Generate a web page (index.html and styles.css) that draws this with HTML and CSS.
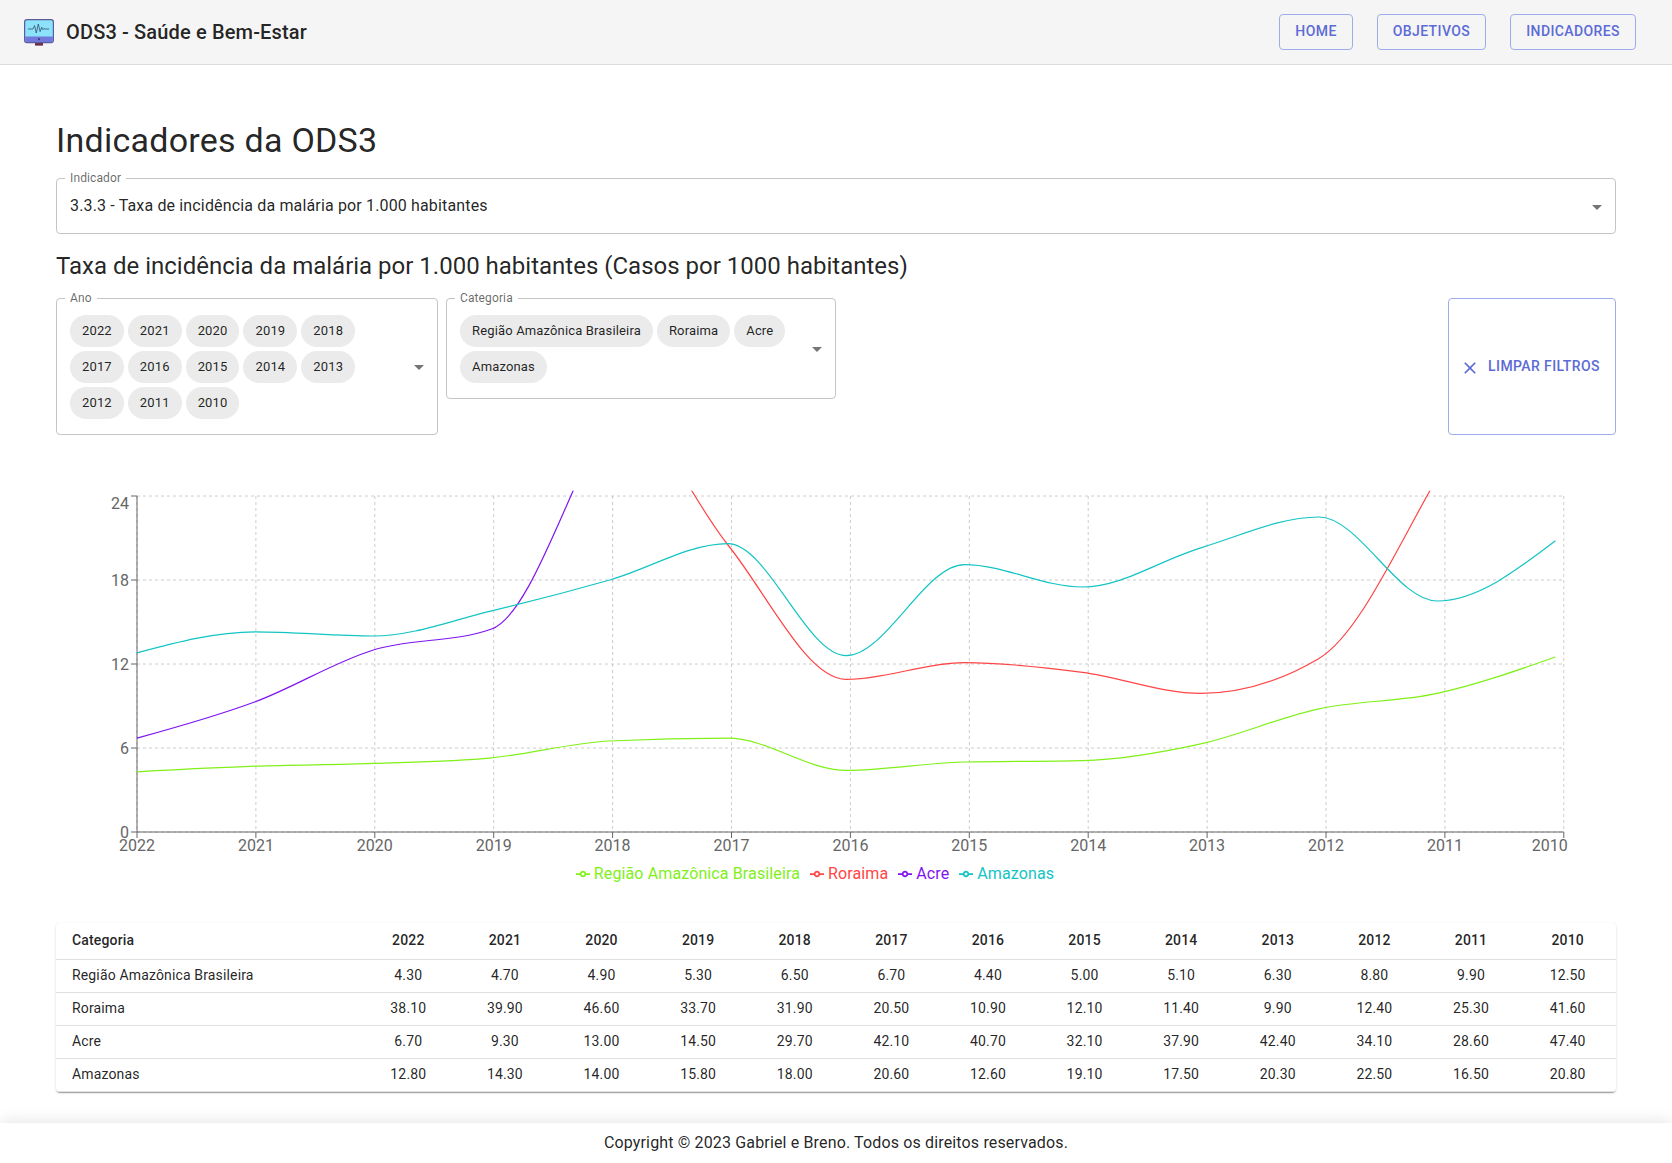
FILE: index.html
```html
<!DOCTYPE html>
<html lang="pt-BR">
<head>
<meta charset="utf-8">
<title>ODS3 - Saúde e Bem-Estar</title>
<link rel="stylesheet" href="styles.css">
</head>
<body>
<header class="appbar">
  <div class="brand">
    <svg class="logo" viewBox="0 0 30 27" aria-hidden="true">
      <rect x="11" y="23" width="8" height="3.6" fill="#6a2c4a"/>
      <rect x="0.6" y="0.6" width="28.8" height="23" rx="2.4" fill="#8be2fa" stroke="#5c5c9c" stroke-width="1.2"/>
      <path d="M1.2 17.5h27.6v3.7a1.8 1.8 0 0 1-1.8 1.8H3a1.8 1.8 0 0 1-1.8-1.8z" fill="#7078dc"/>
      <circle cx="15" cy="20.2" r="1.1" fill="#4a3f78"/>
      <path d="M4 10h5l1.6-3.4 1.7 7.4 2-9 1.8 7.6 1.6-4.4 1.2 2.6 1 -1.2 1.2 .4h4" fill="none" stroke="#35506e" stroke-width="0.8"/>
    </svg>
    <span class="brand-name">ODS3 - Saúde e Bem-Estar</span>
  </div>
  <nav class="nav">
    <a class="btn">Home</a>
    <a class="btn">Objetivos</a>
    <a class="btn">Indicadores</a>
  </nav>
</header>

<main class="content">
  <h1 class="page-title">Indicadores da ODS3</h1>

  <fieldset class="field">
    <legend class="field-label">Indicador</legend>
    <div class="field-body field-body-single">
      <span class="field-value">3.3.3 - Taxa de incidência da malária por 1.000 habitantes</span>
      <svg class="caret" viewBox="0 0 24 24" aria-hidden="true"><path d="M7 10l5 5 5-5z"/></svg>
    </div>
  </fieldset>

  <h2 class="section-title">Taxa de incidência da malária por 1.000 habitantes (Casos por 1000 habitantes)</h2>

  <div class="filters">
    <fieldset class="field field-year">
      <legend class="field-label">Ano</legend>
      <div class="field-body chips">
        <span class="chip">2022</span><span class="chip">2021</span><span class="chip">2020</span><span class="chip">2019</span><span class="chip">2018</span>
        <span class="chip">2017</span><span class="chip">2016</span><span class="chip">2015</span><span class="chip">2014</span><span class="chip">2013</span>
        <span class="chip">2012</span><span class="chip">2011</span><span class="chip">2010</span>
        <svg class="caret" viewBox="0 0 24 24" aria-hidden="true"><path d="M7 10l5 5 5-5z"/></svg>
      </div>
    </fieldset>
    <fieldset class="field field-category">
      <legend class="field-label">Categoria</legend>
      <div class="field-body chips">
        <span class="chip">Região Amazônica Brasileira</span><span class="chip">Roraima</span><span class="chip">Acre</span><span class="chip">Amazonas</span>
        <svg class="caret" viewBox="0 0 24 24" aria-hidden="true"><path d="M7 10l5 5 5-5z"/></svg>
      </div>
    </fieldset>
    <button class="btn btn-clear" type="button">
      <svg class="clear-icon" viewBox="0 0 24 24" aria-hidden="true"><path d="M19 6.41 17.59 5 12 10.59 6.41 5 5 6.41 10.59 12 5 17.59 6.41 19 12 13.41 17.59 19 19 17.59 13.41 12z"/></svg>
      Limpar filtros
    </button>
  </div>

  <svg id="chart" class="chart" viewBox="56 470 1560 392" role="img" aria-label="Gráfico de linhas"></svg>

  <ul class="legend">
    <li class="legend-item s-green"><svg class="legend-icon" viewBox="0 0 32 32"><path d="M0,16h10.67A5.33,5.33,0,1,1,21.33,16H32M21.33,16A5.33,5.33,0,1,1,10.67,16"/></svg>Região Amazônica Brasileira</li>
    <li class="legend-item s-red"><svg class="legend-icon" viewBox="0 0 32 32"><path d="M0,16h10.67A5.33,5.33,0,1,1,21.33,16H32M21.33,16A5.33,5.33,0,1,1,10.67,16"/></svg>Roraima</li>
    <li class="legend-item s-purple"><svg class="legend-icon" viewBox="0 0 32 32"><path d="M0,16h10.67A5.33,5.33,0,1,1,21.33,16H32M21.33,16A5.33,5.33,0,1,1,10.67,16"/></svg>Acre</li>
    <li class="legend-item s-teal"><svg class="legend-icon" viewBox="0 0 32 32"><path d="M0,16h10.67A5.33,5.33,0,1,1,21.33,16H32M21.33,16A5.33,5.33,0,1,1,10.67,16"/></svg>Amazonas</li>
  </ul>

  <div class="paper">
    <table class="data-table">
      <thead>
        <tr><th>Categoria</th><th>2022</th><th>2021</th><th>2020</th><th>2019</th><th>2018</th><th>2017</th><th>2016</th><th>2015</th><th>2014</th><th>2013</th><th>2012</th><th>2011</th><th>2010</th></tr>
      </thead>
      <tbody>
        <tr><td>Região Amazônica Brasileira</td><td>4.30</td><td>4.70</td><td>4.90</td><td>5.30</td><td>6.50</td><td>6.70</td><td>4.40</td><td>5.00</td><td>5.10</td><td>6.30</td><td>8.80</td><td>9.90</td><td>12.50</td></tr>
        <tr><td>Roraima</td><td>38.10</td><td>39.90</td><td>46.60</td><td>33.70</td><td>31.90</td><td>20.50</td><td>10.90</td><td>12.10</td><td>11.40</td><td>9.90</td><td>12.40</td><td>25.30</td><td>41.60</td></tr>
        <tr><td>Acre</td><td>6.70</td><td>9.30</td><td>13.00</td><td>14.50</td><td>29.70</td><td>42.10</td><td>40.70</td><td>32.10</td><td>37.90</td><td>42.40</td><td>34.10</td><td>28.60</td><td>47.40</td></tr>
        <tr><td>Amazonas</td><td>12.80</td><td>14.30</td><td>14.00</td><td>15.80</td><td>18.00</td><td>20.60</td><td>12.60</td><td>19.10</td><td>17.50</td><td>20.30</td><td>22.50</td><td>16.50</td><td>20.80</td></tr>
      </tbody>
    </table>
  </div>
</main>

<footer class="footer">Copyright © 2023 Gabriel e Breno. Todos os direitos reservados.</footer>
<script src="script.js"></script>
</body>
</html>
```
FILE: styles.css
```css
* { box-sizing: border-box; }
html, body { margin: 0; padding: 0; }
body {
  font-family: Roboto, "Liberation Sans", sans-serif;
  color: rgba(0, 0, 0, 0.87);
  background: #fff;
}

.appbar {
  display: flex;
  align-items: center;
  justify-content: space-between;
  height: 65px;
  padding: 0 36px 1px 24px;
  background: #f5f5f5;
  border-bottom: 1px solid #dcdcdc;
}
.brand { display: flex; align-items: center; gap: 12px; }
.logo { width: 30px; height: 27px; display: block; margin-top: 1px; }
.brand-name { font-size: 20px; font-weight: 500; letter-spacing: 0.0075em; line-height: 32px; }
.nav { display: flex; gap: 24px; }

.btn {
  display: inline-flex;
  align-items: center;
  justify-content: center;
  height: 36px;
  padding: 0 15px 2px;
  font-family: inherit;
  font-size: 14px;
  font-weight: 500;
  letter-spacing: 0.02857em;
  text-transform: uppercase;
  color: #5c6bd6;
  background: transparent;
  border: 1px solid #9fabec;
  border-radius: 4px;
}

.content { padding: 54px 56px 0; }
.page-title { margin: 0 0 11px; font-size: 34px; font-weight: 400; line-height: 42px; letter-spacing: 0.00735em; }
.section-title { margin: 16px 0 10px; font-size: 24px; font-weight: 400; line-height: 32px; }

.field {
  min-width: 0;
  margin: 0;
  padding: 0;
  border: 1px solid #c4c4c4;
  border-radius: 4px;
}
.field-label {
  margin-left: 8px;
  padding: 0 5px;
  font-size: 12px;
  line-height: 12px;
  letter-spacing: 0.01em;
  color: rgba(0, 0, 0, 0.6);
}
.field-body { position: relative; }
.field-body-single { display: flex; align-items: center; height: 49px; padding: 0 32px 5px 13px; }
.field-value { font-size: 16px; line-height: 24px; letter-spacing: 0.00938em; }
.caret {
  position: absolute;
  top: calc(50% - 14px);
  right: 6px;
  width: 24px;
  height: 24px;
  fill: rgba(0, 0, 0, 0.54);
}

.filters { display: flex; align-items: flex-start; gap: 8px; }
.field-year { width: 382px; }
.field-category { width: 390px; }
.chips {
  display: flex;
  flex-wrap: wrap;
  align-content: flex-start;
  gap: 4px;
  padding: 11px 32px 15px 13px;
}
.chip {
  display: inline-flex;
  align-items: center;
  height: 32px;
  padding: 0 12px 2px;
  font-size: 13px;
  letter-spacing: 0.15px;
  border-radius: 16px;
  background: #ebebeb;
}
.btn-clear {
  align-self: stretch;
  height: auto;
  width: 168px;
  margin: 6px 0 0 auto;
  white-space: nowrap;
}
.clear-icon { width: 20px; height: 20px; margin: 5px 8px 0 -4px; fill: currentColor; flex: none; }

.chart { display: block; width: 1560px; height: 392px; margin-top: 35px; font-size: 16px; }
.chart-tick { fill: #666; font-family: Roboto, "Liberation Sans", sans-serif; font-size: 16px; }
.chart-grid { stroke: #ccc; stroke-dasharray: 3 3; fill: none; }
.chart-axis { stroke: #666; fill: none; }
.chart-line { fill: none; stroke-width: 1.2; }

.legend {
  display: flex;
  justify-content: center;
  height: 24px;
  margin: 0 0 37px;
  padding: 0 32px 0 0;
  list-style: none;
  font-size: 16px;
  line-height: 24px;
  letter-spacing: 0.12px;
}
.legend-item { display: flex; align-items: center; margin-right: 10px; }
.legend-icon { width: 14px; height: 14px; margin-right: 4px; fill: none; stroke: currentColor; stroke-width: 4; }
.s-green { color: #80f018; stroke: #80f018; }
.s-red { color: #ff4545; stroke: #ff4545; }
.s-purple { color: #7f14f0; stroke: #7f14f0; }
.s-teal { color: #12c4c4; stroke: #12c4c4; }

.paper {
  border-radius: 4px;
  background: #fff;
  box-shadow: 0 2px 1px -1px rgba(0, 0, 0, 0.2), 0 1px 1px 0 rgba(0, 0, 0, 0.14), 0 1px 3px 0 rgba(0, 0, 0, 0.12);
  overflow: hidden;
}
.data-table { width: 100%; table-layout: fixed; border-collapse: collapse; font-size: 14px; letter-spacing: 0.01071em; }
.data-table th, .data-table td { padding: 5px 16px 7px; text-align: center; border-bottom: 1px solid #e0e0e0; }
.data-table th { font-weight: 500; line-height: 24px; }
.data-table td { font-weight: 400; line-height: 20px; }
.data-table th:first-child { width: 304px; text-align: left; }
.data-table td:first-child { text-align: left; }

.footer {
  display: flex;
  align-items: center;
  justify-content: center;
  height: 40px;
  margin-top: 31px;
  padding-bottom: 2px;
  font-size: 16px;
  letter-spacing: 0.00938em;
  background: #fff;
  box-shadow: 0 -2px 16px rgba(0, 0, 0, 0.1);
}
```
FILE: script.js
```js
(function () {
  var years = [2022, 2021, 2020, 2019, 2018, 2017, 2016, 2015, 2014, 2013, 2012, 2011, 2010];
  var series = [
    { cls: 's-green', data: [4.3, 4.7, 4.9, 5.3, 6.5, 6.7, 4.4, 5.0, 5.1, 6.3, 8.8, 9.9, 12.5] },
    { cls: 's-red', data: [38.1, 39.9, 46.6, 33.7, 31.9, 20.5, 10.9, 12.1, 11.4, 9.9, 12.4, 25.3, 41.6] },
    { cls: 's-purple', data: [6.7, 9.3, 13.0, 14.5, 29.7, 42.1, 40.7, 32.1, 37.9, 42.4, 34.1, 28.6, 47.4] },
    { cls: 's-teal', data: [12.8, 14.3, 14.0, 15.8, 18.0, 20.6, 12.6, 19.1, 17.5, 20.3, 22.5, 16.5, 20.8] }
  ];
  var x0 = 137, gridStep = 118.9, lineStep = 118.2;
  var y0 = 832, unit = 14, yTop = y0 - 24 * unit, xEnd = x0 + 12 * gridStep;

  function sign(v) { return v < 0 ? -1 : 1; }

  // Same tangents as a monotone-X cubic interpolation.
  function monotonePath(pts) {
    var n = pts.length, t = [], i;
    for (i = 1; i < n - 1; i++) {
      var h0 = pts[i][0] - pts[i - 1][0], h1 = pts[i + 1][0] - pts[i][0];
      var s0 = (pts[i][1] - pts[i - 1][1]) / h0, s1 = (pts[i + 1][1] - pts[i][1]) / h1;
      var p = (s0 * h1 + s1 * h0) / (h0 + h1);
      t[i] = (sign(s0) + sign(s1)) * Math.min(Math.abs(s0), Math.abs(s1), 0.5 * Math.abs(p)) || 0;
    }
    var hs = pts[1][0] - pts[0][0], he = pts[n - 1][0] - pts[n - 2][0];
    t[0] = (3 * (pts[1][1] - pts[0][1]) / hs - t[1]) / 2;
    t[n - 1] = (3 * (pts[n - 1][1] - pts[n - 2][1]) / he - t[n - 2]) / 2;
    var d = 'M' + pts[0][0] + ',' + pts[0][1];
    for (i = 1; i < n; i++) {
      var dx = (pts[i][0] - pts[i - 1][0]) / 3;
      d += 'C' + (pts[i - 1][0] + dx) + ',' + (pts[i - 1][1] + dx * t[i - 1]) + ',' +
        (pts[i][0] - dx) + ',' + (pts[i][1] - dx * t[i]) + ',' + pts[i][0] + ',' + pts[i][1];
    }
    return d;
  }

  var out = '<defs><clipPath id="plot"><rect x="' + (x0 - 1) + '" y="490.7" width="' + (xEnd - x0 + 2) + '" height="' + (y0 - 489.7) + '"/></clipPath></defs>';
  [0, 6, 12, 18, 24].forEach(function (v) {
    var y = y0 - v * unit;
    out += '<line class="chart-grid" x1="' + x0 + '" x2="' + xEnd + '" y1="' + y + '" y2="' + y + '"/>';
  });
  years.forEach(function (_, i) {
    var x = x0 + i * gridStep;
    out += '<line class="chart-grid" x1="' + x + '" x2="' + x + '" y1="' + yTop + '" y2="' + y0 + '"/>';
  });

  out += '<line class="chart-axis" x1="' + x0 + '" x2="' + x0 + '" y1="' + yTop + '" y2="' + y0 + '"/>';
  out += '<line class="chart-axis" x1="' + x0 + '" x2="' + xEnd + '" y1="' + y0 + '" y2="' + y0 + '"/>';
  [0, 6, 12, 18, 24].forEach(function (v) {
    var y = y0 - v * unit;
    out += '<line class="chart-axis" x1="' + (x0 - 6) + '" x2="' + x0 + '" y1="' + y + '" y2="' + y + '"/>';
    var ly = v === 24 ? y + 7 : y;
    out += '<text class="chart-tick" x="' + (x0 - 8) + '" y="' + (ly + 5.7) + '" text-anchor="end">' + v + '</text>';
  });
  years.forEach(function (year, i) {
    var x = x0 + i * gridStep;
    var labelX = i === years.length - 1 ? x - 14 : x;
    out += '<line class="chart-axis" x1="' + x + '" x2="' + x + '" y1="' + y0 + '" y2="' + (y0 + 6) + '"/>';
    out += '<text class="chart-tick" x="' + labelX + '" y="851.4" text-anchor="middle">' + year + '</text>';
  });

  series.forEach(function (s) {
    var pts = s.data.map(function (v, i) { return [x0 + i * lineStep, y0 - v * unit]; });
    out += '<path class="chart-line ' + s.cls + '" clip-path="url(#plot)" d="' + monotonePath(pts) + '"/>';
  });

  document.getElementById('chart').innerHTML = out;
})();
```
